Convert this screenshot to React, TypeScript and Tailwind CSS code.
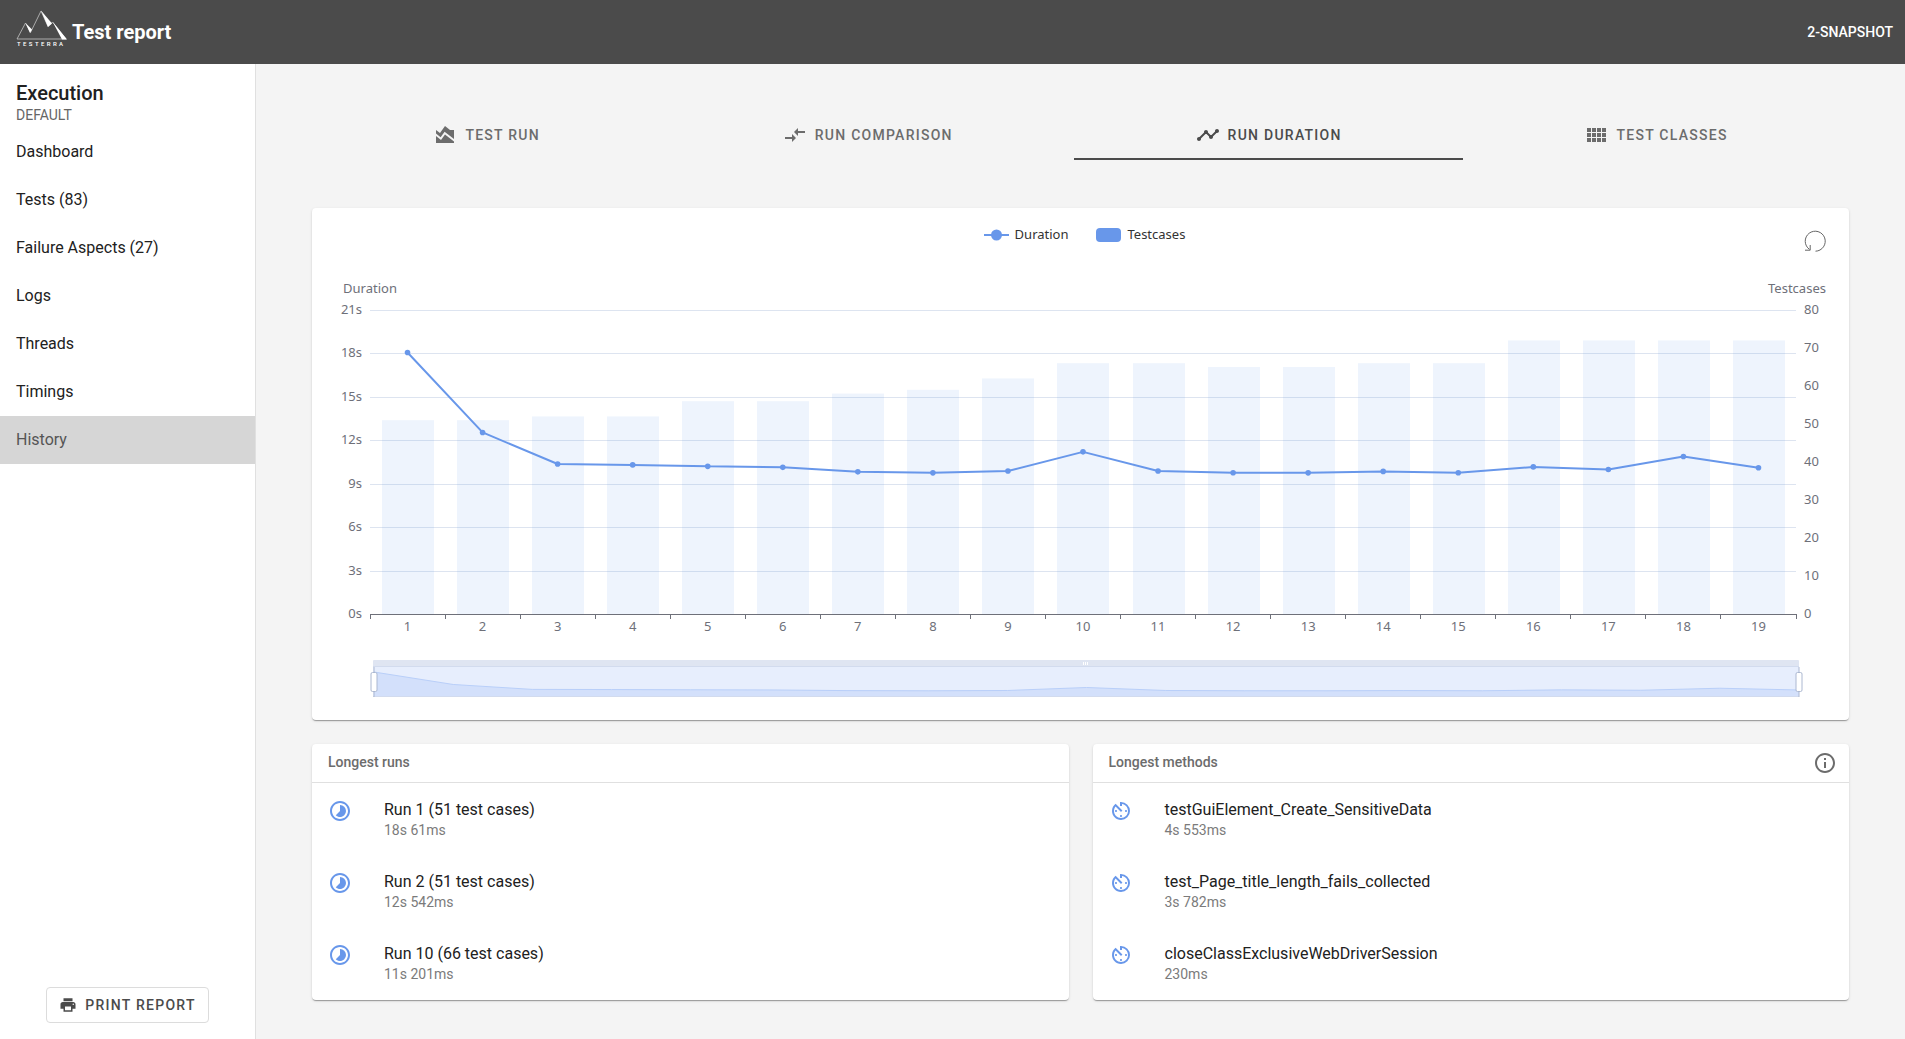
import type { ReactNode } from 'react';
import {
  MdAreaChart,
  MdAvTimer,
  MdCompareArrows,
  MdInfoOutline,
  MdPrint,
  MdTimelapse,
  MdTimeline
} from 'react-icons/md';

const navItems = [
  'Dashboard',
  'Tests (83)',
  'Failure Aspects (27)',
  'Logs',
  'Threads',
  'Timings',
  'History'
];

const runs = [
  { duration: 18.061, testcases: 51 },
  { duration: 12.542, testcases: 51 },
  { duration: 10.36, testcases: 52 },
  { duration: 10.3, testcases: 52 },
  { duration: 10.2, testcases: 56 },
  { duration: 10.13, testcases: 56 },
  { duration: 9.82, testcases: 58 },
  { duration: 9.75, testcases: 59 },
  { duration: 9.88, testcases: 62 },
  { duration: 11.201, testcases: 66 },
  { duration: 9.88, testcases: 66 },
  { duration: 9.76, testcases: 65 },
  { duration: 9.75, testcases: 65 },
  { duration: 9.85, testcases: 66 },
  { duration: 9.76, testcases: 66 },
  { duration: 10.16, testcases: 72 },
  { duration: 9.98, testcases: 72 },
  { duration: 10.88, testcases: 72 },
  { duration: 10.1, testcases: 72 }
];

const longestRuns = [
  { title: 'Run 1 (51 test cases)', duration: '18s 61ms' },
  { title: 'Run 2 (51 test cases)', duration: '12s 542ms' },
  { title: 'Run 10 (66 test cases)', duration: '11s 201ms' }
];

const longestMethods = [
  { title: 'testGuiElement_Create_SensitiveData', duration: '4s 553ms' },
  { title: 'test_Page_title_length_fails_collected', duration: '3s 782ms' },
  { title: 'closeClassExclusiveWebDriverSession', duration: '230ms' }
];

function Logo() {
  return (
    <svg width="52" height="47" viewBox="0 0 52 47" aria-label="Testerra">
      <path d="M1 30 9.500 14 14.500 23.500 25 2 32 17.500 36.500 13 50 30Z" fill="none" stroke="#c4c4c4" strokeWidth="0.8" />
      <path d="M9.500 14 16 20.500 14 24Z" fill="#fff" />
      <path d="M25 1.500 36 14.500 32 18Z" fill="#fff" />
      <path d="M36.500 12.500 51 30.500H46Z" fill="#fff" />
      <text x="1" y="37" className="fill-white text-[6px] font-medium tracking-[0.4em]">
        TESTERRA
      </text>
    </svg>
  );
}

function ViewComfyIcon() {
  return (
    <svg width="24" height="24" viewBox="0 0 24 24" fill="currentColor">
      <path d="M3 9h4V5H3zm0 5h4v-4H3zm5 0h4v-4H8zm5 0h4v-4h-4zM8 9h4V5H8zm5-4v4h4V5zm5 9h4v-4h-4zM3 19h4v-4H3zm5 0h4v-4H8zm5 0h4v-4h-4zm5 0h4v-4h-4zm0-14v4h4V5z" />
    </svg>
  );
}

function Header() {
  return (
    <header className="flex h-16 shrink-0 items-center justify-between bg-[#4b4b4b] pr-3 pl-4 text-white">
      <div className="flex items-center gap-1">
        <Logo />
        <h1 className="text-xl font-bold">Test report</h1>
      </div>
      <span className="text-sm font-medium">2-SNAPSHOT</span>
    </header>
  );
}

function Sidebar() {
  return (
    <aside className="flex w-64 shrink-0 flex-col border-r border-[#e0e0e0] bg-white">
      <div className="px-4 pt-[17px] pb-[3px]">
        <h2 className="text-xl leading-6 font-medium text-[#212121]">Execution</h2>
        <p className="text-sm text-[#666]">DEFAULT</p>
      </div>
      <nav className="flex flex-col">
        {navItems.map((item) => (
          <a
            key={item}
            href="#"
            className={
              item === 'History'
                ? 'flex h-12 items-center bg-[#d6d6d6] px-4 text-[#555]'
                : 'flex h-12 items-center px-4 text-[#212121]'
            }
          >
            {item}
          </a>
        ))}
      </nav>
      <div className="mt-auto flex justify-center pb-4">
        <button
          type="button"
          className="flex h-9 items-center gap-2 rounded border border-[#dcdcdc] px-3 text-sm font-medium tracking-[0.09em] text-[#4b4b4b]"
        >
          <MdPrint size={18} />
          PRINT REPORT
        </button>
      </div>
    </aside>
  );
}

interface TabProps {
  icon: ReactNode;
  label: string;
  active?: boolean;
}

function Tab({ icon, label, active }: TabProps) {
  return (
    <button
      type="button"
      role="tab"
      aria-selected={active ? true : false}
      className={
        active
          ? 'flex h-12 shrink-0 grow items-center justify-center gap-2 border-b-2 border-[#4b4b4b] px-6 text-sm font-medium tracking-[0.09em] text-[#4b4b4b]'
          : 'flex h-12 shrink-0 grow items-center justify-center gap-2 border-b-2 border-transparent px-6 text-sm font-medium tracking-[0.09em] text-[#6c6c6c]'
      }
    >
      {icon}
      {label}
    </button>
  );
}

function Card({ children }: { children: ReactNode }) {
  return (
    <section className="rounded bg-white shadow-[0_2px_1px_-1px_rgba(0,0,0,0.2),0_1px_1px_0_rgba(0,0,0,0.14),0_1px_3px_0_rgba(0,0,0,0.12)]">
      {children}
    </section>
  );
}

// Plot geometry in viewBox units
const LEFT = 58;
const RIGHT = 1484;
const BOTTOM = 342;
const HEIGHT = 304;
const STEP = (RIGHT - LEFT) / runs.length;

const durationY = (value: number) => BOTTOM - (value / 21) * HEIGHT;
const testcasesY = (value: number) => BOTTOM - (value / 80) * HEIGHT;
const centerX = (index: number) => LEFT + STEP * index + STEP / 2;

const linePoints = runs.map((run, i) => `${centerX(i)},${durationY(run.duration)}`).join(' ');

const ZOOM_LEFT = 62;
const ZOOM_WIDTH = 1425;
const zoomPoints = runs
  .map((run, i) => `${ZOOM_LEFT + (ZOOM_WIDTH / 18) * i},${400 + (18.061 - run.duration) * 2.26}`)
  .join(' ');

function ZoomHandle({ x }: { x: number }) {
  return (
    <g stroke="#acb8d1">
      <line x1={x} x2={x} y1="395" y2="425" />
      <rect x={x - 3} y="400.5" width="6" height="19" rx="1.5" fill="#fff" />
    </g>
  );
}

function DurationChart() {
  return (
    <svg
      viewBox="0 0 1537 448"
      className="block h-auto w-full font-['Noto_Sans',sans-serif] text-[13px]"
      role="img"
      aria-label="Run duration"
    >
      {/* Grid */}
      {[3, 6, 9, 12, 15, 18, 21].map((s) => (
        <line
          key={s}
          x1={LEFT}
          x2={RIGHT}
          y1={Math.round(durationY(s)) + 0.5}
          y2={Math.round(durationY(s)) + 0.5}
          stroke="#dde4f0"
        />
      ))}

      {/* Testcases bars */}
      {runs.map((run, i) => (
        <rect
          key={i}
          x={Math.round(LEFT + STEP * i + 12)}
          y={testcasesY(run.testcases)}
          width="52"
          height={BOTTOM - testcasesY(run.testcases)}
          fill="#6897ea"
          fillOpacity="0.11"
        />
      ))}

      {/* Axes */}
      <g stroke="#6e7079">
        <line x1={LEFT} x2={RIGHT + 1} y1={BOTTOM + 0.5} y2={BOTTOM + 0.5} />
        {[...runs, null].map((_, i) => (
          <line
            key={i}
            x1={Math.floor(LEFT + STEP * i) + 0.5}
            x2={Math.floor(LEFT + STEP * i) + 0.5}
            y1={BOTTOM}
            y2={BOTTOM + 5}
          />
        ))}
      </g>
      <g className="fill-[#6e7079]">
        <text x={LEFT} y="21" textAnchor="middle">Duration</text>
        <text x={RIGHT + 1} y="21" textAnchor="middle">Testcases</text>
        {[0, 3, 6, 9, 12, 15, 18, 21].map((s) => (
          <text key={s} x={LEFT - 8} y={Math.round(durationY(s)) + 4} textAnchor="end">
            {`${s}s`}
          </text>
        ))}
        {[0, 10, 20, 30, 40, 50, 60, 70, 80].map((n) => (
          <text key={n} x={RIGHT + 8} y={Math.floor(testcasesY(n)) + 4}>
            {n}
          </text>
        ))}
        {runs.map((_, i) => (
          <text key={i} x={centerX(i)} y={BOTTOM + 17} textAnchor="middle">
            {i + 1}
          </text>
        ))}
      </g>

      {/* Duration line */}
      <polyline points={linePoints} fill="none" stroke="#6897ea" strokeWidth="2" strokeLinejoin="bevel" />
      {runs.map((run, i) => (
        <circle key={i} cx={centerX(i)} cy={durationY(run.duration)} r="2.8" fill="#6897ea" />
      ))}

      {/* Data zoom */}
      <rect x="61" y="388" width="1426" height="8" rx="1" fill="#dfe5f2" />
      <rect x="61" y="395" width="1426" height="30" fill="#e7eefd" />
      <polygon
        points={`${ZOOM_LEFT},424 ${zoomPoints} ${ZOOM_LEFT + ZOOM_WIDTH},424`}
        fill="#d3e0fb"
      />
      <polyline points={zoomPoints} fill="none" stroke="#b9cff9" />
      <path d="M61 394.500H1487M61 424.500H1487" stroke="#d2dbee" />
      <path d="M771.500 390v3M773.500 390v3M775.500 390v3" stroke="#fff" />
      <ZoomHandle x={62} />
      <ZoomHandle x={1487} />
    </svg>
  );
}

function ChartCard() {
  return (
    <Card>
      <div className="grid h-16 grid-cols-[1fr_auto_1fr] items-center pr-5 pl-7">
        <div className="col-start-2 flex gap-7 pb-2.5 font-['Noto_Sans',sans-serif] text-[13px] text-[#333]">
          <button type="button" className="flex items-center gap-1.5">
            <svg width="25" height="14">
              <line x1="0" x2="25" y1="7" y2="7" stroke="#6897ea" strokeWidth="2" />
              <circle cx="12.5" cy="7" r="5.5" fill="#6897ea" />
            </svg>
            Duration
          </button>
          <button type="button" className="flex items-center gap-1.5">
            <span className="h-3.5 w-[25px] rounded bg-[#6897ea]" />
            Testcases
          </button>
        </div>
        <button type="button" aria-label="Restore" className="justify-self-end pt-0.5">
          <svg width="26" height="26" viewBox="0 0 26 26" fill="none" stroke="#666">
            <path d="M12.500 23.200A10 10 0 1 0 6.500 21.400M7.200 17v5.200H2" />
          </svg>
        </button>
      </div>
      <DurationChart />
    </Card>
  );
}

interface ListCardProps {
  title: string;
  action?: ReactNode;
  icon: ReactNode;
  items: { title: string; duration: string }[];
}

function ListCard({ title, action, icon, items }: ListCardProps) {
  return (
    <Card>
      <div className="flex h-[39px] items-center justify-between border-b border-[#e0e0e0] pr-3 pl-4 text-[#6c6c6c]">
        <h3 className="pb-0.5 text-sm font-medium">{title}</h3>
        {action}
      </div>
      <ul className="pb-px">
        {items.map((item) => (
          <li key={item.title} className="flex h-18 gap-8 px-4 pt-4">
            <span className="text-[#6897ea]">{icon}</span>
            <div className="-mt-px">
              <p className="leading-6 text-[#212121]">{item.title}</p>
              <p className="text-sm leading-4 text-[#7b7b7b]">{item.duration}</p>
            </div>
          </li>
        ))}
      </ul>
    </Card>
  );
}

export default function App() {
  return (
    <div className="flex min-h-screen flex-col bg-[#f4f4f4] font-[Roboto,sans-serif]">
      <Header />
      <div className="flex grow">
        <Sidebar />
        <main className="min-w-0 grow px-14 pt-12">
          <div role="tablist" className="mb-12 flex">
            <Tab icon={<MdAreaChart size={24} />} label="TEST RUN" />
            <Tab icon={<MdCompareArrows size={24} />} label="RUN COMPARISON" />
            <Tab icon={<MdTimeline size={24} />} label="RUN DURATION" active />
            <Tab icon={<ViewComfyIcon />} label="TEST CLASSES" />
          </div>
          <div className="flex flex-col gap-6">
            <ChartCard />
            <div className="grid grid-cols-2 gap-6">
              <ListCard title="Longest runs" icon={<MdTimelapse size={24} />} items={longestRuns} />
              <ListCard
                title="Longest methods"
                icon={<MdAvTimer size={24} />}
                items={longestMethods}
                action={
                  <button type="button" aria-label="Info">
                    <MdInfoOutline size={24} />
                  </button>
                }
              />
            </div>
          </div>
        </main>
      </div>
    </div>
  );
}
